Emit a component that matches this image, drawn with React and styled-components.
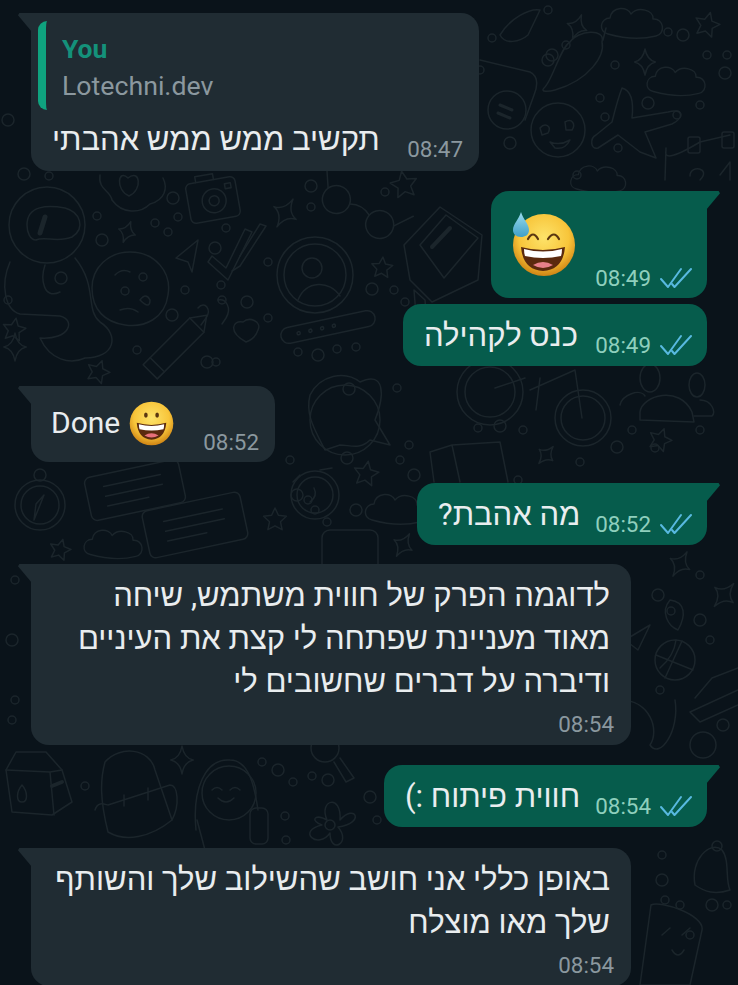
import React from "react";
import styled, { createGlobalStyle } from "styled-components";

const colors = {
  page: "#0a131a",
  doodle: "#1b252b",
  incoming: "#202c33",
  outgoing: "#065c4c",
  text: "#e9edef",
  timeIn: "#8b989f",
  timeOut: "#8fcfbd",
  tick: "#58b9e0",
  quote: "#0fa37f",
  quoteName: "#14917a",
};

const GlobalStyle = createGlobalStyle`
  html, body {
    margin: 0;
    padding: 0;
    background: ${colors.page};
  }
  body {
    font-family: Roboto, "Liberation Sans", "Noto Sans", sans-serif;
  }
`;

const Page = styled.div`
  position: relative;
  width: 738px;
  height: 985px;
  overflow: hidden;
  background: ${colors.page};
`;

const Wallpaper = styled.svg`
  position: absolute;
  inset: 0;
  fill: none;
  stroke: ${colors.doodle};
  stroke-width: 1.5;
  stroke-linecap: round;
  stroke-linejoin: round;
`;

const Thread = styled.div`
  position: relative;
  display: flex;
  flex-direction: column;
  padding: 13px 31px 0;
`;

const Bubble = styled.div`
  position: relative;
  box-sizing: border-box;
  align-self: ${(p) => (p.$out ? "flex-end" : "flex-start")};
  width: ${(p) => p.$width}px;
  margin-top: ${(p) => p.$top || 0}px;
  padding: ${(p) => p.$padding || "10px 15px 9px 21px"};
  border-radius: 18px;
  border-top-left-radius: ${(p) => (p.$tail && !p.$out ? 0 : 18)}px;
  border-top-right-radius: ${(p) => (p.$tail && p.$out ? 0 : 18)}px;
  background: ${(p) => (p.$out ? colors.outgoing : colors.incoming)};
  color: ${colors.text};

  ${(p) =>
    p.$tail &&
    `&::before {
      content: "";
      position: absolute;
      top: 0;
      ${p.$out ? "right: -13px" : "left: -13px"};
      width: 14px;
      height: 19px;
      background: ${p.$out ? colors.outgoing : colors.incoming};
      clip-path: ${
        p.$out
          ? "polygon(0 0, 90% 0, 100% 12%, 0 100%)"
          : "polygon(10% 0, 100% 0, 100% 100%, 0 12%)"
      };
    }`}
`;

const Row = styled.div`
  display: flex;
  align-items: flex-end;
  justify-content: space-between;
`;

const Message = styled.div`
  font-size: 31px;
  line-height: 43px;
  white-space: nowrap;
  text-align: right;
`;

const Time = styled.span`
  font-size: 22.4px;
  line-height: 24px;
  white-space: nowrap;
  color: ${(p) => (p.$out ? colors.timeOut : colors.timeIn)};
`;

const Meta = styled.div`
  display: flex;
  align-items: center;
  gap: 8px;
  flex-shrink: 0;
`;

const FooterTime = styled.div`
  margin: 9px -4px 0 0;
  text-align: right;
`;

const Reply = styled.div`
  position: relative;
  height: 89px;
  margin: -2px 0 8px -14px;
  padding-left: 16px;
  border-left: 8px solid ${colors.quote};
  border-radius: 9px 0 0 9px;
`;

const ReplyName = styled.div`
  padding-top: 12px;
  font-size: 26.5px;
  line-height: 32px;
  font-weight: 700;
  color: ${colors.quoteName};
`;

const ReplyText = styled.div`
  margin-top: 5px;
  font-size: 26.7px;
  line-height: 32px;
  color: #8b989f;
`;

const EmojiWord = styled.div`
  display: flex;
  align-items: center;
  gap: 9px;
  margin-bottom: 8px;
  font-size: 30px;
  line-height: 46px;
`;

const BigEmoji = styled.svg`
  display: block;
  margin-bottom: 12px;
`;

const Ticks = () => (
  <svg width="33" height="22" viewBox="0 0 33 22" fill="none" stroke={colors.tick} strokeWidth="2" strokeLinecap="round" strokeLinejoin="round">
    <path d="M2 12 L9 20 L22 2" />
    <path d="M13 17 L15.5 20 L32 2" />
  </svg>
);

const GrinEmoji = ({ size }) => (
  <svg width={size} height={size} viewBox="0 0 64 64">
    <defs>
      <radialGradient id="grinFace" cx="50%" cy="38%" r="62%">
        <stop offset="0%" stopColor="#fde36a" />
        <stop offset="65%" stopColor="#f8c53a" />
        <stop offset="100%" stopColor="#cf8414" />
      </radialGradient>
    </defs>
    <circle cx="32" cy="32" r="31" fill="url(#grinFace)" />
    <ellipse cx="24" cy="20" rx="2.6" ry="3.8" fill="#5a3610" />
    <ellipse cx="40" cy="20" rx="2.6" ry="3.8" fill="#5a3610" />
    <path d="M11 31 Q32 37 53 31 Q51 54 32 55 Q13 54 11 31Z" fill="#5b2a0e" />
    <path d="M14 33 Q32 38 50 33 Q50 37 49 40 Q32 44 15 40 Q14 37 14 33Z" fill="#fff" />
    <path d="M22 49 Q32 43 42 49 Q32 55 22 49Z" fill="#e8707a" />
  </svg>
);

const SweatEmoji = () => (
  <BigEmoji width="65" height="66" viewBox="0 0 65 66">
    <defs>
      <radialGradient id="sweatFace" cx="50%" cy="38%" r="62%">
        <stop offset="0%" stopColor="#fde36a" />
        <stop offset="65%" stopColor="#f8c53a" />
        <stop offset="100%" stopColor="#cf8414" />
      </radialGradient>
      <linearGradient id="drop" x1="0" y1="0" x2="0" y2="1">
        <stop offset="0%" stopColor="#9bdcef" />
        <stop offset="100%" stopColor="#3f9fc6" />
      </linearGradient>
    </defs>
    <circle cx="32" cy="33" r="31" fill="url(#sweatFace)" />
    <path d="M16 27 Q21 18 26 27" fill="none" stroke="#5a3610" strokeWidth="2.2" strokeLinecap="round" />
    <path d="M36 27 Q42 18 47 27" fill="none" stroke="#5a3610" strokeWidth="2.2" strokeLinecap="round" />
    <path d="M9 35 Q31 41 53 35 Q51 58 31 59 Q11 58 9 35Z" fill="#5b2a0e" />
    <path d="M12 37 Q31 42 50 37 Q50 41 49 44 Q31 48 13 44 Q12 41 12 37Z" fill="#fff" />
    <path d="M21 53 Q31 47 41 53 Q31 59 21 53Z" fill="#e8808a" />
    <path d="M9 0 C11 7 17 12 17 18 C17 23 13 25 9 25 C4 25 1 22 1 18 C1 12 7 7 9 0Z" fill="url(#drop)" />
  </BigEmoji>
);

// the doodles of the chat wallpaper
const dots = [
  [24, 174], [49, 176], [97, 216], [173, 198], [155, 223], [178, 217], [102, 240], [168, 232], [226, 228],
  [215, 248], [185, 290], [222, 300], [247, 302], [221, 285], [268, 262], [172, 315], [268, 318], [216, 362],
  [207, 362], [137, 350], [298, 352], [318, 355], [337, 349], [356, 347], [372, 289], [394, 290], [405, 302],
  [311, 186], [311, 207], [385, 192], [465, 30], [492, 38], [480, 70], [552, 55], [548, 10], [566, 45], [548, 60],
  [615, 65], [668, 32], [683, 35], [707, 55], [727, 55], [725, 73], [600, 98], [605, 117], [648, 103], [677, 115],
  [700, 105], [510, 143], [577, 175], [618, 148], [349, 389], [397, 388], [478, 428], [500, 426], [523, 430],
  [632, 430], [617, 447], [700, 430], [655, 448], [347, 458], [409, 445], [400, 460], [414, 475], [290, 460],
  [308, 500], [297, 495], [315, 510], [327, 522], [356, 510], [518, 480], [580, 462], [658, 595], [625, 620],
  [700, 575], [700, 620], [710, 640], [660, 690], [723, 725], [85, 786], [262, 762], [278, 770], [293, 782],
  [312, 776], [328, 780], [285, 816], [286, 840], [370, 797], [377, 820], [662, 855], [662, 880], [665, 900],
  [680, 905], [712, 905], [727, 905], [690, 935], [8, 120], [8, 300], [15, 580], [12, 640], [15, 700], [12, 720],
];

const star = (r, inner = 0.48) => {
  let d = "";
  for (let i = 0; i < 10; i++) {
    const rad = i % 2 ? r * inner : r;
    const a = (i * Math.PI) / 5 - Math.PI / 2;
    d += `${i ? "L" : "M"}${(rad * Math.cos(a)).toFixed(1)} ${(rad * Math.sin(a)).toFixed(1)}`;
  }
  return d + "Z";
};

const sparkle = (r) =>
  `M0 ${-r} Q2 -2 ${r * 0.8} 0 Q2 2 0 ${r} Q-2 2 ${-r * 0.8} 0 Q-2 -2 0 ${-r}Z`;

const cloud = "M-26 10 C-36 8 -34 -6 -24 -6 C-22 -18 -6 -18 -3 -10 C4 -18 20 -14 19 -5 C30 -6 32 10 22 12 C6 16 -12 14 -26 10Z";

const stars = [
  [14, 330, 12, 10], [404, 185, 14, -10], [382, 268, 11, 5], [98, 372, 12, 20], [707, 25, 13, 15],
  [366, 474, 13, 10], [660, 440, 12, 20], [275, 520, 12, 0], [60, 550, 11, 15],
];

const sparkles = [
  [285, 213, 16, 30], [127, 232, 11, 20], [15, 347, 14, 0], [577, 27, 13, 20], [645, 62, 13, 0], [546, 455, 11, 40],
  [680, 564, 14, 30], [724, 595, 15, 40], [182, 760, 14, 0], [403, 545, 13, 30],
];

const clouds = [
  [634, 24, 1], [678, 82, 0.95], [115, 545, 0.95], [398, 510, 1], [600, 180, 0.9],
];

const Doodles = () => (
  <Wallpaper width="738" height="985" viewBox="0 0 738 985">
    {dots.map(([x, y], i) => (
      <circle key={i} cx={x} cy={y} r={i % 3 === 0 ? 6 : 4} />
    ))}
    {stars.map(([x, y, r, a], i) => (
      <path key={i} d={star(r)} transform={`translate(${x} ${y}) rotate(${a})`} />
    ))}
    {sparkles.map(([x, y, r, a], i) => (
      <path key={i} d={sparkle(r)} transform={`translate(${x} ${y}) rotate(${a})`} />
    ))}
    {clouds.map(([x, y, s], i) => (
      <path key={i} d={cloud} transform={`translate(${x} ${y}) scale(${s})`} />
    ))}

    {/* astronaut */}
    <circle cx="47" cy="225" r="38" />
    <path d="M27 225 C27 205 48 205 65 208 C80 212 86 228 72 237 C58 243 44 236 36 240 C30 240 27 232 27 225Z" />
    <path d="M40 233 L45 217" strokeWidth="5" />
    <path d="M10 262 C0 285 5 310 20 314 L60 316 C76 320 70 340 40 338 C50 360 70 365 85 358 C115 358 120 335 100 322 C85 310 98 286 75 258" />
    <circle cx="61" cy="278" r="6" />
    <path d="M45 265 C40 280 44 300 60 292" />

    {/* cookie planet */}
    <path d="M130 252 C155 252 172 272 168 295 C165 318 145 328 125 325 C105 322 92 310 92 288 C92 268 108 252 130 252Z" />
    <path d="M115 275 Q122 268 130 272" />
    <circle cx="143" cy="277" r="4" />
    <circle cx="125" cy="291" r="4" />
    <path d="M140 300 Q146 292 150 300 Q150 310 140 300Z" />
    <path d="M120 310 Q130 306 138 312" />

    {/* cloud with heart */}
    <path d="M100 175 C98 190 110 190 112 200 C122 214 140 214 150 204 C165 200 168 188 163 178" />
    <path d="M128 178 C118 168 115 190 129 196 C143 190 140 168 128 178Z" />

    {/* camera */}
    <g transform="translate(213 200) rotate(-10)">
      <rect x="-25" y="-20" width="50" height="40" rx="5" />
      <circle cx="1" cy="1" r="12" />
      <circle cx="1" cy="1" r="5" />
      <path d="M-14 -20 V-26 H4 V-20" />
      <rect x="14" y="-14" width="6" height="5" />
    </g>

    {/* paper plane and ticks */}
    <path d="M198 240 L176 258 L188 262 L192 272Z" />
    <path d="M208 262 L228 280 L252 232 L245 229 L226 268 L212 256Z" />
    <path d="M232 271 L240 266 L266 226 L260 224 L240 256" />

    {/* avatar */}
    <circle cx="315" cy="275" r="38" />
    <circle cx="315" cy="275" r="31" />
    <circle cx="312" cy="268" r="10" />
    <path d="M298 300 C306 280 330 280 340 296" />

    {/* quotes, heart */}
    <path d="M198 308 C205 300 212 310 206 318 L201 325 M218 300 C226 298 232 308 226 318 L222 324" />
    <path d="M246 342 C228 332 232 320 243 322 C250 316 262 322 258 330 C256 336 252 340 246 342Z" />

    {/* pencil */}
    <g transform="translate(170 352) rotate(45)">
      <path d="M-10 -38 L0 -52 L10 -38 V28 H-10Z" />
      <path d="M-10 -38 H10 M-10 18 H10" />
    </g>

    {/* band */}
    <g transform="translate(328 327) rotate(-12)">
      <rect x="-48" y="-8" width="96" height="16" rx="8" />
      <circle cx="-30" cy="0" r="1.6" />
      <circle cx="-18" cy="0" r="1.6" />
      <circle cx="-6" cy="0" r="1.6" />
      <circle cx="6" cy="0" r="1.6" />
    </g>

    {/* glasses */}
    <g transform="translate(358 212) rotate(30)">
      <circle cx="-25" cy="0" r="14" />
      <circle cx="25" cy="0" r="14" />
      <path d="M-11 -3 Q0 -9 11 -3 M-38 -6 L-50 -24 M38 -6 L50 -24" />
    </g>

    {/* bag with envelope */}
    <path d="M404 245 L440 207 L482 235 L478 280 L432 302 L410 280Z" />
    <path d="M420 245 L446 215 L478 238 L444 278Z" />
    <path d="M432 247 L450 228" strokeWidth="4" />
    <path d="M414 290 L425 300 L430 360 L418 340Z" />

    {/* hand over face */}
    <circle cx="345" cy="420" r="35" />
    <path d="M310 395 C320 375 345 370 360 382 C385 370 385 395 375 420 L390 445 L370 440 C360 450 350 445 340 445 L325 450 C315 430 305 415 310 395Z" />

    {/* banana */}
    <path d="M544 88 C552 82 560 48 570 42 C578 30 606 28 602 42 C605 55 590 80 555 90 C548 92 540 92 544 88Z" />
    <path d="M606 28 L603 40" />

    {/* feather */}
    <path d="M500 35 C510 18 530 8 540 10 L528 35 C520 42 505 45 500 35Z" />

    {/* robot and smiley with hearts */}
    <path d="M480 60 L530 72 C538 76 538 85 534 95 L525 120" />
    <circle cx="507" cy="110" r="19" />
    <path d="M500 105 L512 110 M498 113 L510 118" strokeWidth="3" />
    <circle cx="558" cy="130" r="27" />
    <path d="M540 128 C545 122 552 126 548 133 L542 135Z M565 122 C572 118 576 124 572 130 L566 130Z" />
    <path d="M550 142 Q560 146 570 140 Q565 150 555 148Z" />

    {/* aeroplane */}
    <path d="M622 88 C630 90 634 100 632 118 L668 112 C684 108 684 118 672 124 L645 132 L656 158 L640 152 L618 135 L598 148 C590 150 590 138 596 135 L612 122 C615 110 618 98 622 88Z" />

    {/* easel and number */}
    <path d="M666 148 L665 180 M666 150 C664 158 670 160 700 142 M700 142 L730 135 M690 176 C690 164 712 168 700 180 M720 175 L730 162 V180" />
    <rect x="688" y="137" width="12" height="16" rx="2" />
    <rect x="722" y="132" width="12" height="16" rx="2" />

    {/* bicycle */}
    <circle cx="490" cy="392" r="33" />
    <circle cx="583" cy="418" r="28" />
    <circle cx="583" cy="418" r="22" />
    <circle cx="490" cy="392" r="25" />
    <path d="M495 388 L525 378 M530 390 L575 370 L582 418 M540 378 L536 410" />

    {/* people */}
    <path d="M640 412 C642 395 680 385 692 412 L694 422 L640 420Z" />
    <ellipse cx="650" cy="378" rx="10" ry="14" />
    <ellipse cx="697" cy="385" rx="8" ry="12" />
    <path d="M620 405 C622 395 640 388 645 396 M700 400 C712 400 716 412 712 416 H694" />

    {/* book, clock, phone */}
    <path d="M430 452 L452 445 L500 442 L508 482 M452 445 L460 482 M430 452 L434 482" />
    <circle cx="315" cy="495" r="24" />
    <circle cx="315" cy="495" r="18" />
    <path d="M314 488 Q318 496 310 502" />
    <path d="M320 470 L332 468 M300 475 L293 482" />
    <rect x="322" y="530" width="56" height="70" rx="8" />

    {/* compass */}
    <circle cx="40" cy="505" r="25" />
    <circle cx="40" cy="505" r="19" />
    <circle cx="40" cy="475" r="6" />
    <path d="M44 495 L34 520 L36 504Z" />

    {/* speech bubbles */}
    <g transform="translate(135 490) rotate(-12)">
      <rect x="-48" y="-22" width="96" height="44" rx="6" />
      <path d="M-30 -10 H28 M-30 0 H28 M-30 10 H12" />
    </g>
    <g transform="translate(195 525) rotate(-12)">
      <rect x="-50" y="-24" width="100" height="48" rx="6" />
      <path d="M-30 -10 H30 M-30 0 H30 M-30 10 H10" />
    </g>

    {/* pin, basketball, sneaker, pot */}
    <path d="M670 600 C686 602 686 616 678 630 C668 626 660 612 670 600Z" />
    <circle cx="671" cy="611" r="4" />
    <circle cx="675" cy="660" r="20" />
    <path d="M656 655 L693 670 M682 641 L665 678 M660 668 Q674 656 676 640" />
    <path d="M690 712 L738 690 M695 698 L712 678 L738 668 M690 712 L700 722 L738 705" />
    <path d="M620 700 C650 700 660 730 650 745 C660 760 680 730 675 700" />
    <circle cx="703" cy="745" r="13" />
    <path d="M625 640 L650 625 L638 650Z" />

    {/* milk carton */}
    <path d="M6 770 L16 752 L46 752 L62 770 L72 802 L52 815 L12 812Z" />
    <path d="M6 770 L50 772 L62 770 M50 772 L54 815" />
    <path d="M22 785 C28 792 28 802 22 802 C16 802 16 792 22 785Z" />
    <path d="M52 786 L62 782" strokeWidth="4" />

    {/* backpack */}
    <path d="M105 762 C120 745 150 748 155 770 L172 820 C150 838 125 842 108 832 C100 800 100 780 105 762Z" />
    <path d="M95 810 C98 800 106 805 108 805 L170 785 C178 785 180 805 172 820 M124 795 V806 M148 788 V800" />

    {/* headphones */}
    <circle cx="229" cy="793" r="27" />
    <path d="M196 830 C192 790 205 758 230 760 C250 760 255 790 258 810" />
    <path d="M212 790 Q217 785 222 790 M230 790 Q235 785 240 790 M218 798 Q226 806 234 798" />
    <rect x="250" y="808" width="18" height="36" rx="6" />
    <path d="M197 820 L205 850" />

    {/* flower, magnifier */}
    <g transform="translate(330 825)">
      <circle cx="0" cy="0" r="5" />
      <path d="M-3 -5 C-12 -25 12 -32 10 -5 C25 -22 36 -2 8 2 C22 18 0 30 0 8 C-12 25 -34 6 -8 0 C-20 -4 -16 -12 -3 -5Z" />
    </g>
    <path d="M340 758 L354 778 L346 782 L334 762" />
    <circle cx="325" cy="748" r="14" />

    {/* bell, popsicle */}
    <path d="M695 885 C690 860 710 840 722 850 C730 860 725 880 730 890 C715 895 705 892 695 885Z" />
    <circle cx="717" cy="846" r="5" />
    <path d="M651 905 C660 900 705 915 702 930 L690 985 H640 Z" />
    <path d="M662 935 L670 928 M682 935 L690 928 M672 950 Q678 960 684 950" />
  </Wallpaper>
);

export default function App() {
  return (
    <>
      <GlobalStyle />
      <Page>
        <Doodles />
        <Thread>
          <Bubble $tail $width={448} $padding="10px 16px 10px 21px">
            <Reply>
              <ReplyName>You</ReplyName>
              <ReplyText>Lotechni.dev</ReplyText>
            </Reply>
            <Row>
              <Message dir="rtl">תקשיב ממש ממש אהבתי</Message>
              <Time>08:47</Time>
            </Row>
          </Bubble>

          <Bubble $out $tail $top={20} $width={216} $padding="21px 15px 8px 21px">
            <Row>
              <SweatEmoji />
              <Meta>
                <Time $out>08:49</Time>
                <Ticks />
              </Meta>
            </Row>
          </Bubble>

          <Bubble $out $top={6} $width={304}>
            <Row>
              <Message dir="rtl">כנס לקהילה</Message>
              <Meta>
                <Time $out>08:49</Time>
                <Ticks />
              </Meta>
            </Row>
          </Bubble>

          <Bubble $tail $top={20} $width={244} $padding="14px 16px 8px 20px">
            <Row>
              <EmojiWord>
                Done
                <GrinEmoji size={45} />
              </EmojiWord>
              <Time>08:52</Time>
            </Row>
          </Bubble>

          <Bubble $out $tail $top={21} $width={290}>
            <Row>
              <Message dir="rtl">מה אהבת?</Message>
              <Meta>
                <Time $out>08:52</Time>
                <Ticks />
              </Meta>
            </Row>
          </Bubble>

          <Bubble $tail $top={19} $width={600} $padding="10px 21px 9px 21px">
            <Message dir="rtl">
              לדוגמה הפרק של חווית משתמש, שיחה
              <br />
              מאוד מעניינת שפתחה לי קצת את העיניים
              <br />
              ודיברה על דברים שחשובים לי
            </Message>
            <FooterTime>
              <Time>08:54</Time>
            </FooterTime>
          </Bubble>

          <Bubble $out $tail $top={20} $width={323}>
            <Row>
              <Message dir="rtl">חווית פיתוח :)</Message>
              <Meta>
                <Time $out>08:54</Time>
                <Ticks />
              </Meta>
            </Row>
          </Bubble>

          <Bubble $tail $top={21} $width={600} $padding="10px 21px 9px 21px">
            <Message dir="rtl">
              באופן כללי אני חושב שהשילוב שלך והשותף
              <br />
              שלך מאו מוצלח
            </Message>
            <FooterTime>
              <Time>08:54</Time>
            </FooterTime>
          </Bubble>
        </Thread>
      </Page>
    </>
  );
}
